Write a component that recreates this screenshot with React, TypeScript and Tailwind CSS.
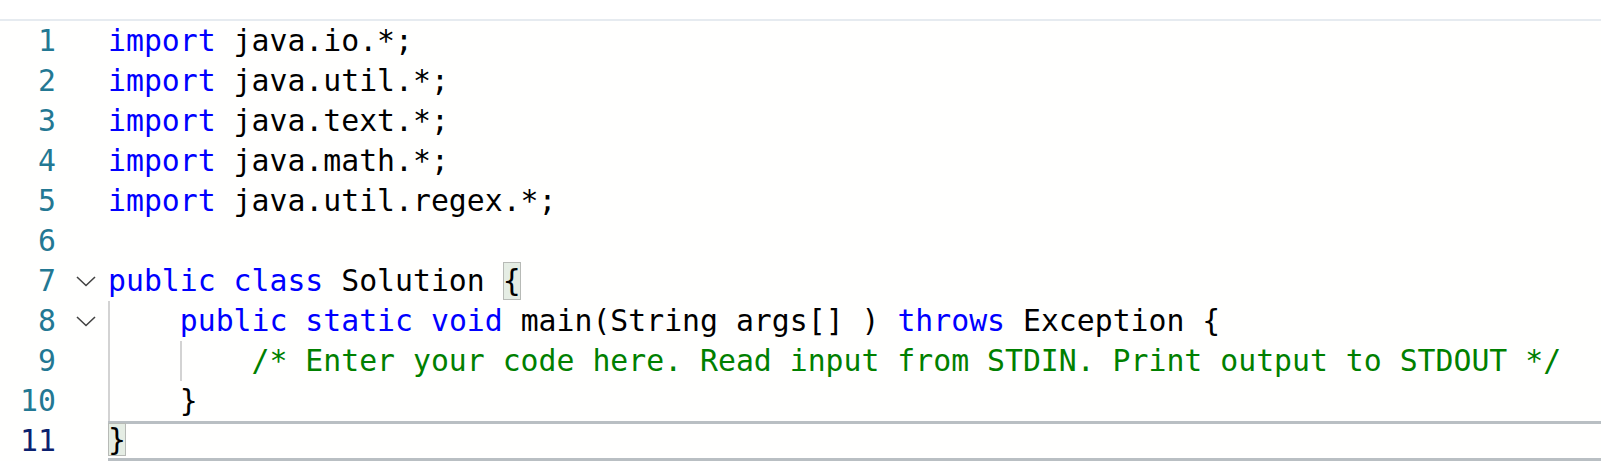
import React, { ReactNode } from "react";

type Tok = { t: string; c?: "kw" | "cm" };

const kw = (t: string): Tok => ({ t, c: "kw" });
const tx = (t: string): Tok => ({ t });

const Chevron = () => (
    <svg width="20" height="11" viewBox="0 0 20 11" className="ml-[20px]">
        <polyline points="1,1 10,9.5 19,1" fill="none" stroke="#424242" strokeWidth="1.6" />
    </svg>
)

const Match = ({ children, tall }: { children: ReactNode, tall?: boolean }) => (
    <span
        className={
            tall
                ? "inline-block align-top mt-[1px] h-[38px] leading-[38px] bg-[#e5ede4] shadow-[inset_0_0_0_1px_#b7bab6]"
                : "inline-block align-top mt-[-1px] h-[33px] leading-[33px] bg-[#e5ede4] shadow-[inset_0_0_0_1px_#b7bab6]"
        }
    >
        {children}
    </span>
)

const Guide = ({ children }: { children: ReactNode }) => (
    <span className="inline-block shadow-[inset_2px_0_0_#d3d3d3]">{children}</span>
)

const Toks = ({ toks }: { toks: Tok[] }) => (
    <>
        {toks.map((tk, i) => (
            <span
                key={i}
                className={tk.c === "kw" ? "text-[#0000ff]" : tk.c === "cm" ? "text-[#008000]" : "text-black"}
            >
                {tk.t}
            </span>
        ))}
    </>
)

const Row = ({ n, fold, guide, active, children }: { n: number, fold?: boolean, guide?: boolean, active?: boolean, children?: ReactNode }) => (
    <div className="flex h-[40px]">
        <div className={"w-[56px] text-right leading-[40px] " + (active ? "text-[#0b216f]" : "text-[#237893]")}>{n}</div>
        <div className="w-[52px] flex items-center">{fold ? <Chevron /> : null}</div>
        <div
            className={
                "flex-1 whitespace-pre " +
                (active
                    ? "border-y-[3px] border-[#b9bfc3] leading-[34px]"
                    : "leading-[40px] " + (guide ? "shadow-[inset_2px_0_0_#d3d3d3]" : ""))
            }
        >
            {children}
        </div>
    </div>
)

const App = () => {
    const imports = ["java.io.*;", "java.util.*;", "java.text.*;", "java.math.*;", "java.util.regex.*;"]

    return (
        <div className="w-[1601px] h-[461px] overflow-hidden bg-white font-['DejaVu_Sans_Mono',monospace] text-[29.8px]">
            <div className="h-[19px] bg-white border-b-2 border-[#e6ebf0] box-content"></div>
            <div className="bg-[#fffffe]">
                {imports.map((imp, i) => (
                    <Row key={i} n={i + 1}>
                        <Toks toks={[kw("import"), tx(" " + imp)]} />
                    </Row>
                ))}
                <Row n={6} />
                <Row n={7} fold>
                    <Toks toks={[kw("public"), tx(" "), kw("class"), tx(" Solution ")]} />
                    <Match tall>{"{"}</Match>
                </Row>
                <Row n={8} fold guide>
                    <Toks
                        toks={[
                            tx("    "),
                            kw("public"),
                            tx(" "),
                            kw("static"),
                            tx(" "),
                            kw("void"),
                            tx(" main(String args[] ) "),
                            kw("throws"),
                            tx(" Exception {"),
                        ]}
                    />
                </Row>
                <Row n={9} guide>
                    {"    "}
                    <Guide>{"    "}</Guide>
                    <Toks toks={[{ t: "/* Enter your code here. Read input from STDIN. Print output to STDOUT */", c: "cm" }]} />
                </Row>
                <Row n={10} guide>
                    <Toks toks={[tx("    }")]} />
                </Row>
                <Row n={11} active>
                    <Match>{"}"}</Match>
                </Row>
            </div>
        </div>
    )
}

export default App
